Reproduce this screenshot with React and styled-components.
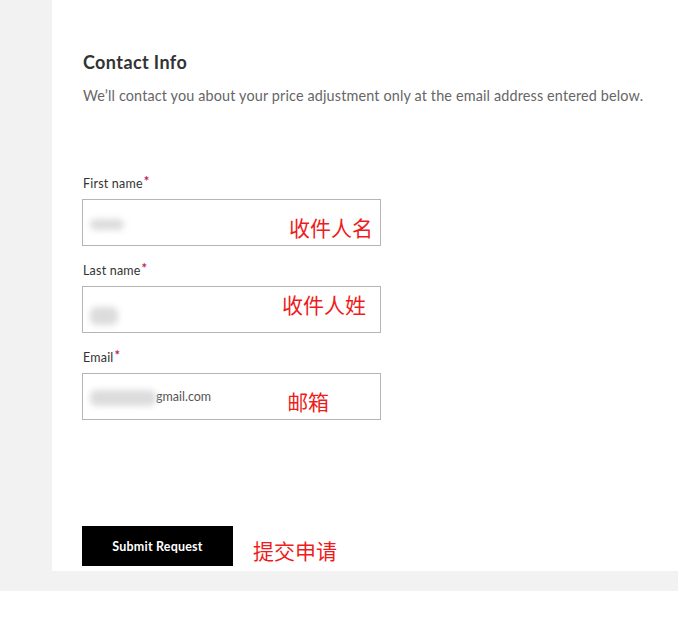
import React from "react";
import styled, { createGlobalStyle } from "styled-components";

const Global = createGlobalStyle`
  html, body { margin: 0; padding: 0; background: #fff; }
  body { font-family: Lato, "Open Sans", "Noto Sans CJK SC", sans-serif; }
`;

const Page = styled.div`
  background: #f2f2f2;
  padding: 0 0 20px 52px;
`;

const Panel = styled.section`
  background: #fff;
  padding: 52px 0 5px 30px;
`;

const Heading = styled.h2`
  margin: 0 0 0 1px;
  font-size: 18px;
  line-height: 20px;
  font-weight: 700;
  color: #333;
  letter-spacing: 0.4px;
`;

const Sub = styled.p`
  margin: 14px 0 0 1px;
  font-size: 14.4px;
  line-height: 20px;
  color: #666;
  letter-spacing: 0.15px;
`;

const Form = styled.form`
  margin-top: 70px;
  display: flex;
  flex-direction: column;
`;

const Field = styled.div`
  display: flex;
  flex-direction: column;
  margin-bottom: 17px;
`;

const Label = styled.label`
  display: block;
  height: 16px;
  font-size: 12.5px;
  line-height: 16px;
  color: #333;
  margin-bottom: 7px;
  margin-left: 1px;
  letter-spacing: 0.2px;
`;

const Star = styled.span`
  color: #c2185b;
  font-weight: 700;
  font-size: 13px;
  line-height: 0;
  position: relative;
  top: -2px;
  margin-left: 1px;
`;

const InputBox = styled.div`
  box-sizing: border-box;
  width: 299px;
  height: 47px;
  border: 1px solid #b5b5b5;
  display: flex;
  align-items: center;
  padding: 0 0 0 7px;
`;

const Blur = styled.span`
  display: inline-block;
  width: ${(p) => p.$w}px;
  height: ${(p) => p.$h}px;
  background: #dcdcdc;
  filter: blur(3px);
  border-radius: 6px;
  margin-top: ${(p) => p.$top || 0}px;
  flex: none;
`;

const Value = styled.span`
  font-size: 12.5px;
  color: #555;
`;

const Note = styled.span`
  color: #ee1c1c;
  font-family: "Noto Sans CJK SC", sans-serif;
  font-size: 21px;
  line-height: 24px;
  margin-left: ${(p) => (p.$left != null ? `${p.$left}px` : "auto")};
  margin-right: ${(p) => p.$right || 0}px;
  margin-top: ${(p) => p.$top || 0}px;
  flex: none;
`;

const Actions = styled.div`
  margin-top: 89px;
  display: flex;
  align-items: center;
`;

const Button = styled.button`
  width: 151px;
  height: 40px;
  background: #000;
  color: #fff;
  border: none;
  font-family: Lato, sans-serif;
  font-size: 12.5px;
  font-weight: 700;
  letter-spacing: 0.2px;
  cursor: pointer;
`;

const fields = [
  { label: "First name", blur: { w: 34, h: 11, top: 4 }, note: "收件人名", right: 7, top: 8 },
  { label: "Last name", blur: { w: 28, h: 18, top: 12 }, note: "收件人姓", right: 14, top: -12 },
];

export default function App() {
  return (
    <>
      <Global />
      <Page>
        <Panel>
          <Heading>Contact Info</Heading>
          <Sub>We’ll contact you about your price adjustment only at the email address entered below.</Sub>
          <Form onSubmit={(e) => e.preventDefault()}>
            {fields.map((f) => (
              <Field key={f.label}>
                <Label>
                  {f.label}
                  <Star>*</Star>
                </Label>
                <InputBox>
                  <Blur $w={f.blur.w} $h={f.blur.h} $top={f.blur.top} />
                  <Note $right={f.right} $top={f.top}>{f.note}</Note>
                </InputBox>
              </Field>
            ))}
            <Field>
              <Label>
                Email<Star>*</Star>
              </Label>
              <InputBox>
                <Blur $w={66} $h={16} $top={3} />
                <Value>gmail.com</Value>
                <Note $left={76} $top={8}>邮箱</Note>
              </InputBox>
            </Field>
            <Actions>
              <Button type="submit">Submit Request</Button>
              <Note $left={20} $top={8}>提交申请</Note>
            </Actions>
          </Form>
        </Panel>
      </Page>
    </>
  );
}
